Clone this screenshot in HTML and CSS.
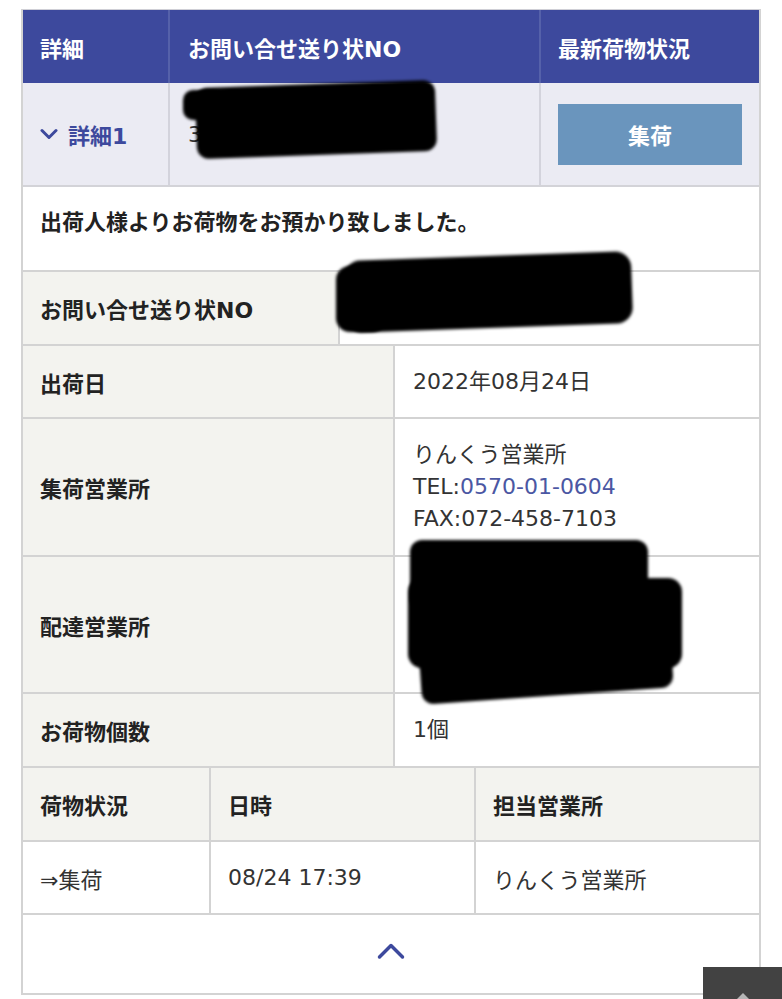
FILE: index.html
```html
<!DOCTYPE html>
<html lang="ja">

<head>
  <title>お問い合せ結果</title>
  <meta name="viewport" content="width=device-width, initial-scale=1.0">
  <meta charset="UTF-8">
  <link rel="stylesheet" href="styles.css">
</head>

<body>

<div class="sheet">
  <div class="head">
    <div class="cell">詳細</div>
    <div class="cell">お問い合せ送り状NO</div>
    <div class="cell">最新荷物状況</div>
  </div>

  <div class="summary">
    <div class="cell toggle">
      <svg width="18" height="12" viewBox="0 0 18 12"><path d="M2 2.5 L9 9.5 L16 2.5" fill="none" stroke="#3d499d" stroke-width="3" stroke-linecap="round" stroke-linejoin="round"/></svg>
      <span>詳細1</span>
    </div>
    <div class="cell number">3000000000000</div>
    <div class="cell status">
      <button class="badge">集荷</button>
    </div>
  </div>

  <div class="message">出荷人様よりお荷物をお預かり致しました。</div>

  <div class="row no-row">
    <div class="label">お問い合せ送り状NO</div>
    <div class="value"></div>
  </div>

  <div class="row">
    <div class="label">出荷日</div>
    <div class="value">2022年08月24日</div>
  </div>

  <div class="row tall">
    <div class="label">集荷営業所</div>
    <div class="value">
      <div>
        りんくう営業所<br>
        TEL:<a href="#" class="tel">0570-01-0604</a><br>
        FAX:072-458-7103
      </div>
    </div>
  </div>

  <div class="row tall tall2">
    <div class="label">配達営業所</div>
    <div class="value">
      <div>
        〇〇営業所<br>
        TEL:0000-00-0000<br>
        FAX:000-000-0000
      </div>
    </div>
  </div>

  <div class="row last">
    <div class="label">お荷物個数</div>
    <div class="value">1個</div>
  </div>

  <div class="track track-head">
    <div class="cell">荷物状況</div>
    <div class="cell">日時</div>
    <div class="cell">担当営業所</div>
  </div>
  <div class="track">
    <div class="cell">⇒集荷</div>
    <div class="cell">08/24 17:39</div>
    <div class="cell">りんくう営業所</div>
  </div>

  <div class="foot">
    <svg width="30" height="18" viewBox="0 0 30 18"><path d="M3.5 15 L15 3.5 L26.5 15" fill="none" stroke="#3d499d" stroke-width="3.5" stroke-linecap="round" stroke-linejoin="round"/></svg>
  </div>
</div>

<!-- 塗りつぶし部分 -->
<div class="ink ink1a"></div>
<div class="ink ink1b"></div>
<div class="ink ink2a"></div>
<div class="ink ink2b"></div>
<div class="ink ink3a"></div>
<div class="ink ink3b"></div>
<div class="ink ink3c"></div>

<a href="#" class="page-top"><span class="arrow"></span></a>

</body>

</html>
```

FILE: styles.css
```css
body {
  margin: 0;
  position: relative;
  min-height: 999px;
  overflow: hidden;
  background: #fff;
  color: #222;
  font-family: "DejaVu Sans", "Noto Sans CJK JP", sans-serif;
  font-size: 22px;
}

.sheet {
  margin: 9px 21px 0;
  border: 2px solid #d3d3d3;
  border-top: 1px solid #cfcfd6;
}

.cell,
.label,
.value {
  box-sizing: border-box;
  display: flex;
  align-items: center;
  padding-left: 17px;
}

.head {
  display: grid;
  grid-template-columns: 147px 371px 1fr;
  height: 73px;
  background: #3d499d;
  color: #fff;
  font-weight: 700;
}
.head .cell {
  border-right: 2px solid #5561aa;
}
.head .cell:nth-child(2) {
  padding-left: 18px;
}
.head .cell:last-child {
  border-right: none;
}

.summary {
  display: grid;
  grid-template-columns: 147px 371px 1fr;
  box-sizing: border-box;
  height: 104px;
  background: #ebebf3;
  border-bottom: 2px solid #d3d3d8;
}
.summary .cell {
  border-right: 2px solid #d3d3dc;
}
.summary .cell:last-child {
  border-right: none;
}
.toggle {
  gap: 10px;
  color: #3d499d;
  font-weight: 700;
}
.number {
  padding-left: 18px;
  color: #333;
}
.status {
  padding: 0 17px;
}
.badge {
  width: 100%;
  height: 61px;
  border: none;
  background: #6a95bd;
  color: #fff;
  font-family: inherit;
  font-size: 22px;
  font-weight: 700;
}

.message {
  box-sizing: border-box;
  height: 85px;
  padding: 20px 17px 0;
  line-height: 32px;
  font-weight: 700;
  border-bottom: 2px solid #d3d3d3;
}

.row {
  display: grid;
  grid-template-columns: 372px 1fr;
  box-sizing: border-box;
  height: 73px;
  border-bottom: 2px solid #d3d3d3;
}
.row .label {
  background: #f3f3ef;
  border-right: 2px solid #d3d3d3;
  font-weight: 700;
}
.row .value {
  padding-left: 18px;
  line-height: 32px;
  color: #333;
}
.no-row {
  grid-template-columns: 317px 1fr;
  height: 74px;
}
.tall {
  height: 138px;
}
.tall2 {
  height: 137px;
}
.last {
  height: 74px;
}

.tel {
  color: #4b57a3;
  text-decoration: none;
}

.track {
  display: grid;
  grid-template-columns: 188px 265px 1fr;
  box-sizing: border-box;
  height: 73px;
  border-bottom: 2px solid #d3d3d3;
  color: #333;
}
.track .cell {
  border-right: 2px solid #d3d3d3;
}
.track .cell:last-child {
  border-right: none;
}
.track-head {
  height: 74px;
  background: #f3f3ef;
  color: #222;
  font-weight: 700;
}

.foot {
  height: 78px;
  display: flex;
  align-items: center;
  justify-content: center;
}
.foot svg {
  margin-top: -6px;
}

/* 黒塗り */
.ink {
  position: absolute;
  background: #000;
  filter: blur(1.5px);
}
.ink1a { left: 183px; top: 90px; width: 40px; height: 30px; border-radius: 10px; }
.ink1b { left: 196px; top: 84px; width: 240px; height: 71px; border-radius: 12px; transform: rotate(-2deg); }
.ink2a { left: 336px; top: 266px; width: 50px; height: 66px; border-radius: 14px; }
.ink2b { left: 345px; top: 256px; width: 287px; height: 72px; border-radius: 16px; transform: rotate(-2deg); }
.ink3a { left: 410px; top: 540px; width: 238px; height: 70px; border-radius: 12px; }
.ink3b { left: 408px; top: 578px; width: 274px; height: 90px; border-radius: 14px; }
.ink3c { left: 420px; top: 636px; width: 252px; height: 60px; border-radius: 12px; transform: rotate(-4deg); }

.page-top {
  position: absolute;
  left: 703px;
  top: 967px;
  width: 79px;
  height: 79px;
  background: #424242;
}
.page-top .arrow {
  position: absolute;
  left: 30px;
  top: 26px;
  border-left: 10px solid transparent;
  border-right: 10px solid transparent;
  border-bottom: 10px solid #b5b5b5;
}
```
